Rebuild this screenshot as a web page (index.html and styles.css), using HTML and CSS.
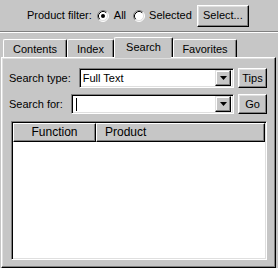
FILE: index.html
```html
<!DOCTYPE html>
<html>
<head>
<meta charset="utf-8">
<link rel="stylesheet" href="styles.css">
</head>
<body>
<div class="filter">
  <span class="lbl">Product filter:</span>
  <span class="radio"><svg width="12" height="12" viewBox="0 0 12 12"><circle cx="6" cy="6" r="5" fill="#fff"/><path d="M2.11 9.89A5.5 5.5 0 0 1 9.89 2.11" fill="none" stroke="#808080"/><path d="M9.89 2.11A5.5 5.5 0 0 1 2.11 9.89" fill="none" stroke="#fff"/><path d="M2.82 9.18A4.5 4.5 0 0 1 9.18 2.82" fill="none" stroke="#000"/><path d="M9.18 2.82A4.5 4.5 0 0 1 2.82 9.18" fill="none" stroke="#dfdfdf"/><circle cx="6" cy="6" r="2" fill="#000"/></svg></span>
  <span class="rlbl all">All</span>
  <span class="radio r2"><svg width="12" height="12" viewBox="0 0 12 12"><circle cx="6" cy="6" r="5" fill="#fff"/><path d="M2.11 9.89A5.5 5.5 0 0 1 9.89 2.11" fill="none" stroke="#808080"/><path d="M9.89 2.11A5.5 5.5 0 0 1 2.11 9.89" fill="none" stroke="#fff"/><path d="M2.82 9.18A4.5 4.5 0 0 1 9.18 2.82" fill="none" stroke="#000"/><path d="M9.18 2.82A4.5 4.5 0 0 1 2.82 9.18" fill="none" stroke="#dfdfdf"/></svg></span>
  <span class="rlbl sel">Selected</span>
  <button class="btn selbtn">Select...</button>
</div>
<div class="sep"></div>
<div class="tabs">
  <div class="tab t-contents">Contents</div>
  <div class="tab t-index">Index</div>
  <div class="tab active t-search">Search</div>
  <div class="tab t-fav">Favorites</div>
</div>
<div class="panel">
  <div class="row">
    <span class="rowlbl">Search type:</span>
    <div class="combo"><span class="val">Full Text</span><span class="drop"><svg width="7" height="4" viewBox="0 0 7 4"><path d="M0 0H7L3.5 4Z" fill="#000"/></svg></span></div>
    <button class="btn side">Tips</button>
  </div>
  <div class="row row2">
    <span class="rowlbl">Search for:</span>
    <div class="combo"><span class="val"><span class="caret"></span></span><span class="drop"><svg width="7" height="4" viewBox="0 0 7 4"><path d="M0 0H7L3.5 4Z" fill="#000"/></svg></span></div>
    <button class="btn side">Go</button>
  </div>
  <div class="list">
    <div class="lhead">
      <div class="col fn">Function</div>
      <div class="col pr">Product</div>
    </div>
    <div class="lbody"></div>
  </div>
</div>
</body>
</html>
```

FILE: styles.css
```css
html, body {
  margin: 0;
  padding: 0;
}
body {
  width: 278px;
  height: 268px;
  overflow: hidden;
  background: #c6c6c6;
  font: 11px/13px "Liberation Sans", Arial, sans-serif;
  color: #000;
}
.filter {
  height: 31px;
  display: flex;
  align-items: center;
  padding-left: 27px;
  box-sizing: border-box;
}
.lbl { margin-right: 5px; }
.radio { width: 12px; height: 12px; display: block; }
.radio svg { display: block; }
.rlbl.all { margin-left: 5px; margin-right: 7px; }
.rlbl.sel { margin-left: 4px; }
.btn {
  font: inherit;
  color: #000;
  background: #c6c6c6;
  border: 1px solid;
  border-color: #fff #000 #000 #fff;
  box-shadow: inset -1px -1px #808080, inset 1px 1px #dfdfdf;
  padding: 0;
  height: 21px;
  box-sizing: border-box;
  text-align: center;
}
.selbtn { width: 52px; margin-left: 5px; height: 22px; }
.sep {
  border-top: 1px solid #808080;
  border-bottom: 1px solid #fff;
}
.tabs {
  height: 24px;
  display: flex;
  align-items: flex-end;
  margin-left: 1px;
  padding-left: 2px;
}
.tab {
  position: relative;
  height: 18px;
  box-sizing: border-box;
  border-top: 1px solid #fff;
  border-left: 1px solid #fff;
  border-right: 1px solid #000;
  box-shadow: inset -1px 0 #808080;
  border-radius: 2px 2px 0 0;
  text-align: center;
  padding-top: 3px;
}
.tab.active {
  height: 20px;
  z-index: 1;
}
.tab.active::after {
  content: "";
  position: absolute;
  left: 0;
  right: 1px;
  bottom: -1px;
  height: 1px;
  background: #c6c6c6;
}
.t-contents { width: 64px; }
.t-index { width: 47px; }
.t-search { width: 59px; }
.t-fav { width: 64px; }
.panel {
  margin: 0 2px 0 1px;
  height: 211px;
  box-sizing: border-box;
  border: 1px solid;
  border-color: #fff #000 #000 #fff;
  box-shadow: inset -1px -1px #808080, inset 1px 1px #dfdfdf;
  padding: 10px 8px 0 7px;
}
.row {
  display: flex;
  align-items: center;
  height: 20px;
}
.row2 { margin-top: 6px; }
.rowlbl { margin-right: 8px; white-space: nowrap; }
.combo {
  flex: 1;
  height: 20px;
  box-sizing: border-box;
  display: flex;
  align-items: center;
  background: #fff;
  border: 1px solid;
  border-color: #808080 #fff #fff #808080;
  box-shadow: inset 1px 1px #000, inset -1px -1px #dfdfdf;
  padding: 1px 2px 1px 2px;
}
.val {
  flex: 1;
  padding-left: 1px;
  display: flex;
  align-items: center;
  height: 16px;
}
.caret {
  display: block;
  width: 1px;
  height: 13px;
  background: #000;
  margin-left: 1px;
}
.drop {
  width: 16px;
  height: 16px;
  box-sizing: border-box;
  display: flex;
  align-items: center;
  justify-content: center;
  background: #c6c6c6;
  border: 1px solid;
  border-color: #dfdfdf #000 #000 #dfdfdf;
  box-shadow: inset -1px -1px #808080, inset 1px 1px #fff;
}
.drop svg { display: block; }
.side { width: 29px; margin-left: 4px; height: 20px; }
.list {
  margin: 7px 0 0 2px;
  height: 139px;
  box-sizing: border-box;
  background: #fff;
  border: 1px solid;
  border-color: #808080 #fff #fff #808080;
  box-shadow: inset 1px 1px #000, inset -1px -1px #dfdfdf;
  padding: 1px;
  display: flex;
  flex-direction: column;
}
.lhead {
  display: flex;
  height: 19px;
}
.col {
  box-sizing: border-box;
  height: 19px;
  background: #c6c6c6;
  border: 1px solid;
  border-color: #fff #000 #000 #fff;
  box-shadow: inset -1px -1px #808080;
  padding-top: 1px;
  font-size: 12px;
  line-height: 15px;
}
.fn { width: 83px; text-align: center; }
.pr { flex: 1; padding-left: 8px; }
.lbody { flex: 1; }
```
